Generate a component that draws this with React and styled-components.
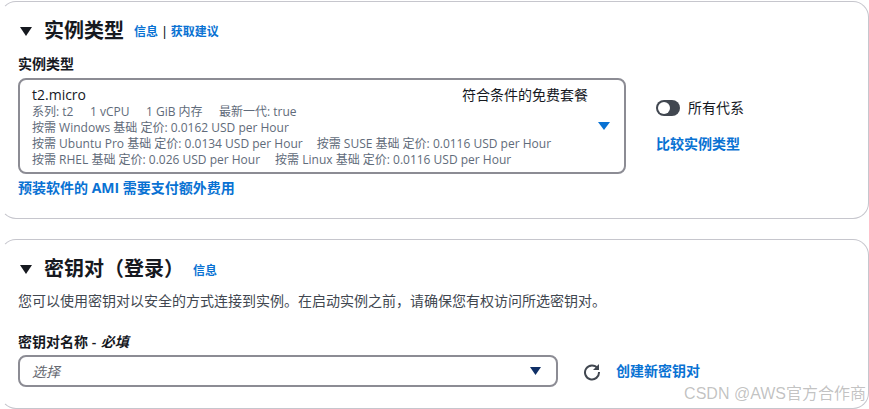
import React from "react";
import styled, { createGlobalStyle } from "styled-components";

const Global = createGlobalStyle`
  html, body { margin: 0; padding: 0; background: #fff; overflow: hidden; }
  body { font-family: "Open Sans", "Noto Sans CJK SC", sans-serif; color: #16191f; }
`;
const Page = styled.div`
  position: relative;
  width: 869px;
  height: 409px;
  padding-top: 1px;
  box-sizing: border-box;
  display: flex;
  flex-direction: column;
  gap: 20px;
`;
const Card = styled.section`
  box-sizing: border-box;
  width: 869px;
  height: ${p => p.$h}px;
  flex: none;
  border: 1px solid #c6c6cd;
  border-left-color: transparent;
  border-radius: 16px;
  padding: ${p => p.$pt}px 0 0 17px;
`;
const Head = styled.div`
  display: flex;
  align-items: center;
  height: 28px;
`;
const Caret = styled.svg`
  width: 12px;
  height: 9px;
  margin-left: 2px;
  margin-right: 12px;
  flex: none;
`;
const Title = styled.h2`
  margin: 0;
  font-size: 20px;
  line-height: 28px;
  font-weight: 700;
  color: #16191f;
`;
const Links = styled.span`
  font-size: 12px;
  font-weight: 600;
  line-height: 16px;
  margin-left: ${p => p.$ml}px;
  margin-top: ${p => p.$mt}px;
  color: #0f1b2a;
`;
const A = styled.a`
  display: block;
  color: #0972d3;
  font-weight: 700;
  font-size: 14px;
  line-height: 20px;
  text-decoration: none;
`;
const InlineLink = styled.a`
  color: #0972d3;
  font-weight: 600;
  font-size: 12px;
  text-decoration: none;
`;
const Label = styled.div`
  font-size: 14px;
  line-height: 16px;
  font-weight: 600;
  color: #16191f;
  margin-top: ${p => p.$mt}px;
  em { font-style: italic; font-weight: 600; margin-left: 1px; }
`;
const Row = styled.div`
  display: flex;
  align-items: ${p => p.$align || "center"};
  margin-top: ${p => p.$mt || 0}px;
`;
const Select = styled.div`
  box-sizing: border-box;
  width: ${p => p.$w}px;
  height: ${p => p.$h}px;
  flex: none;
  border: 2px solid #8c8c94;
  border-radius: 8px;
  padding: ${p => p.$pad};
  display: flex;
  justify-content: space-between;
  align-items: center;
`;
const Body = styled.div`
  flex: 1;
  min-width: 0;
`;
const TopLine = styled.div`
  display: flex;
  justify-content: space-between;
  align-items: center;
  height: 16px;
  margin-bottom: 1px;
  font-size: 14px;
  line-height: 16px;
  color: #16191f;
`;
const Tag = styled.span`
  font-size: 14px;
  margin-right: 10px;
`;
const Detail = styled.div`
  font-size: 12px;
  line-height: 16px;
  color: #5f6b7a;
  white-space: pre;
  display: flex;
  gap: ${p => p.$gap || 0}px;
`;
const Arrow = styled.svg`
  width: ${p => p.$w}px;
  height: ${p => p.$h}px;
  flex: none;
  margin-top: ${p => p.$mt || 0}px;
`;
const Side = styled.div`
  margin-left: 30px;
  display: flex;
  flex-direction: column;
  gap: 18px;
  margin-top: 22px;
`;
const ToggleRow = styled.div`
  display: flex;
  align-items: center;
  gap: 8px;
  font-size: 14px;
  line-height: 16px;
  color: #16191f;
`;
const Toggle = styled.span`
  position: relative;
  width: 24px;
  height: 16px;
  border-radius: 8px;
  background: #414750;
  display: block;
  &::after {
    content: "";
    position: absolute;
    left: 2px;
    top: 2px;
    width: 12px;
    height: 12px;
    border-radius: 50%;
    background: #fff;
  }
`;
const Desc = styled.p`
  margin: 8px 0 0;
  font-size: 14px;
  line-height: 20px;
  color: #414750;
`;
const Placeholder = styled.span`
  font-size: 14px;
  font-style: italic;
  color: #656871;
`;
const Refresh = styled.svg`
  width: 18px;
  height: 18px;
  margin: 2px 15px 0 25px;
  flex: none;
`;
const Watermark = styled.div`
  position: absolute;
  right: 3px;
  bottom: 5px;
  font-size: 16px;
  line-height: 20px;
  color: rgba(120, 120, 120, 0.45);
  font-family: "Liberation Sans", "Noto Sans CJK SC", sans-serif;
`;

const TitleCaret = () => (
  <Caret viewBox="0 0 12 9"><polygon points="0,0 12,0 6,9" fill="#16191f" /></Caret>
);

export default function App() {
  return (
    <Page>
      <Global />
      <Card $h={218} $pt={15}>
        <Head>
          <TitleCaret />
          <Title>实例类型</Title>
          <Links $ml={10} $mt={2}><InlineLink>信息</InlineLink> | <InlineLink>获取建议</InlineLink></Links>
        </Head>
        <Label $mt={11}>实例类型</Label>
        <Row $mt={6} $align="flex-start">
          <Select $w={608} $h={96} $pad="2px 14px 0 12px">
            <Body>
              <TopLine><span>t2.micro</span><Tag>符合条件的免费套餐</Tag></TopLine>
              <Detail $gap={16.5}><span>系列: t2</span><span>1 vCPU</span><span>1 GiB 内存</span><span>最新一代: true</span></Detail>
              <Detail><span>按需 Windows 基础 定价: 0.0162 USD per Hour</span></Detail>
              <Detail $gap={14}><span>按需 Ubuntu Pro 基础 定价: 0.0134 USD per Hour</span><span>按需 SUSE 基础 定价: 0.0116 USD per Hour</span></Detail>
              <Detail $gap={15}><span>按需 RHEL 基础 定价: 0.026 USD per Hour</span><span>按需 Linux 基础 定价: 0.0116 USD per Hour</span></Detail>
            </Body>
            <Arrow viewBox="0 0 12 8" $w={12} $h={8} $mt={-2}><polygon points="0,0 12,0 6,8" fill="#0972d3" /></Arrow>
          </Select>
          <Side>
            <ToggleRow><Toggle />所有代系</ToggleRow>
            <A>比较实例类型</A>
          </Side>
        </Row>
        <Row $mt={4}><A>预装软件的 AMI 需要支付额外费用</A></Row>
      </Card>
      <Card $h={170} $pt={15}>
        <Head>
          <TitleCaret />
          <Title>密钥对（登录）</Title>
          <Links $ml={9} $mt={3}><InlineLink>信息</InlineLink></Links>
        </Head>
        <Desc>您可以使用密钥对以安全的方式连接到实例。在启动实例之前，请确保您有权访问所选密钥对。</Desc>
        <Label $mt={23}>密钥对名称 - <em>必填</em></Label>
        <Row $mt={5}>
          <Select $w={540} $h={32} $pad="0 15px 0 12px">
            <Placeholder>选择</Placeholder>
            <Arrow viewBox="0 0 11 8" $w={11} $h={8}><polygon points="0,0 11,0 5.5,8" fill="#0f2f66" /></Arrow>
          </Select>
          <Refresh viewBox="0 0 18 18" fill="none">
            <path d="M14.6 5.2A7 7 0 1 0 16 9" stroke="#414750" strokeWidth="2" />
            <polygon points="16,1 16,7 10,7" fill="#414750" />
          </Refresh>
          <A>创建新密钥对</A>
        </Row>
      </Card>
      <Watermark>CSDN @AWS官方合作商</Watermark>
    </Page>
  );
}
